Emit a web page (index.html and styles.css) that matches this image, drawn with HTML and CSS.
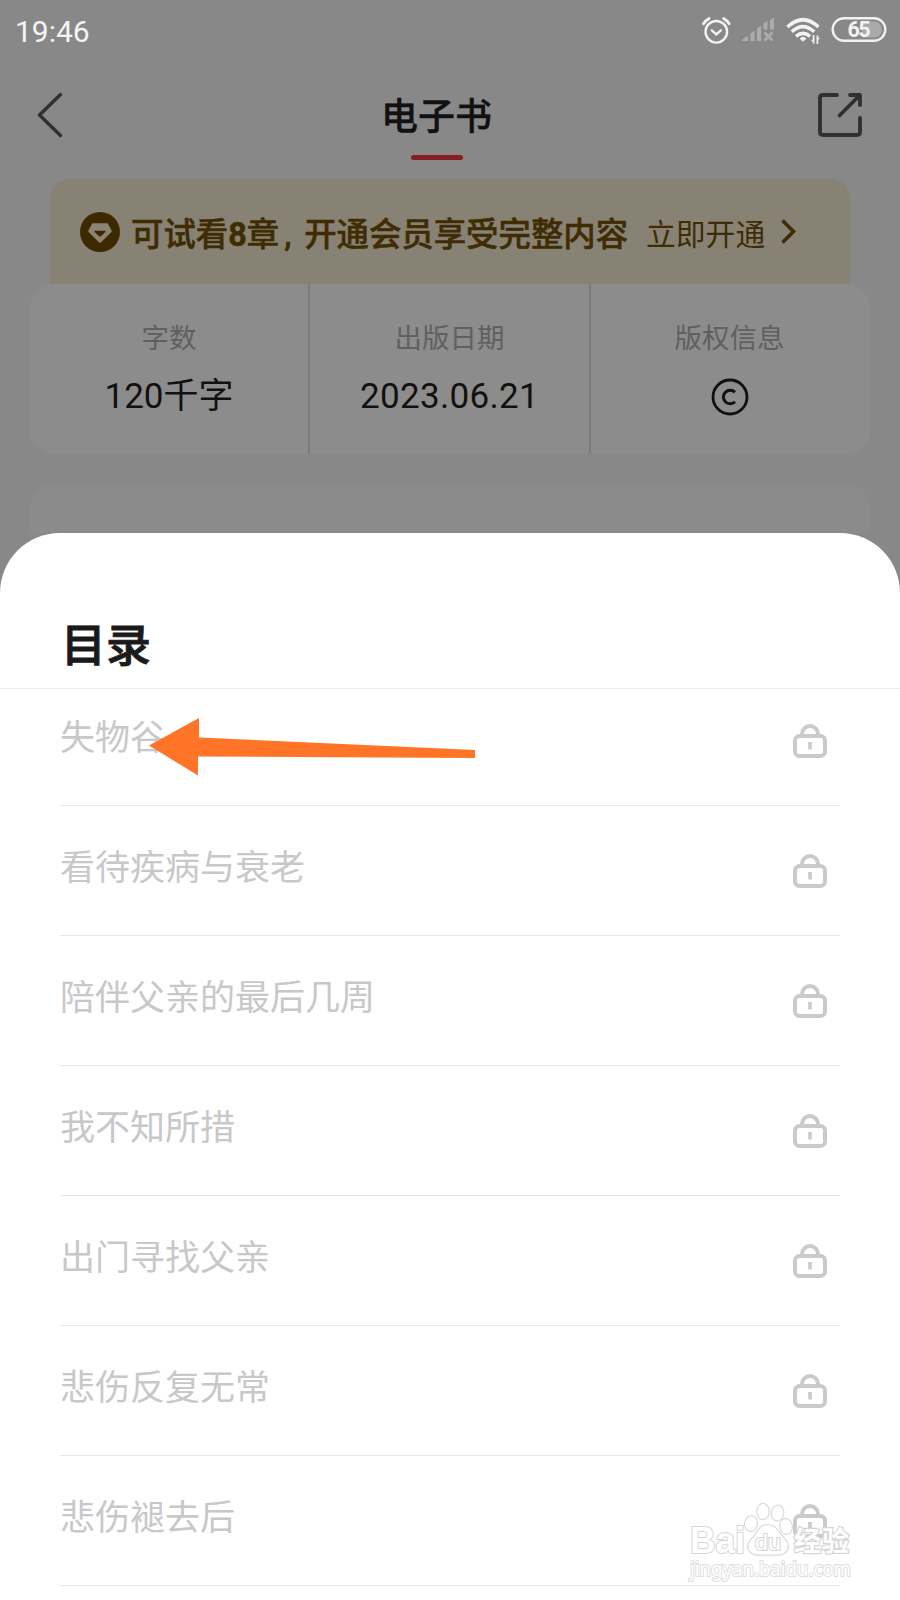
FILE: index.html
```
<!DOCTYPE html>
<html lang="zh-CN">
<head>
<meta charset="utf-8">
<title>电子书</title>
<link rel="stylesheet" href="styles.css">
</head>
<body>
<div class="screen">
  <div class="status">
    <span class="time">19:46</span>
    <svg class="status-icons" width="192" height="32" viewBox="700 14 192 32" fill="none">
      <g stroke="#f2f2f2" stroke-width="2.4" stroke-linecap="round">
        <circle cx="716.3" cy="31.8" r="10.8"/>
        <path d="M711.8 30.3l4.5 4 4.5-4"/>
        <path d="M703.5 23.8q2.200-3.600 5.600-5.300M729.200 23.800q-2.200-3.600-5.600-5.300" stroke-width="2.8"/>
      </g>
      <g fill="#acacac">
        <path d="M742 41q0-2 6-5.500v5.500zM750.500 33.500l4-3v10.500h-4zM757 28.500l4-3v15.500h-4zM763.500 23.500l4-3v9h-4zM770 20l4-2.500v12h-4z"/>
        <path d="M764.500 32.500l8 8M772.500 32.500l-8 8" stroke="#acacac" stroke-width="2.600"/>
      </g>
      <g stroke="#f2f2f2" stroke-width="3.600">
        <path d="M787.500 27Q803 12.500 818.500 27"/>
        <path d="M791.800 31.800Q803 21.500 814.200 31.800"/>
        <path d="M796 36.400Q803 30.500 810 36.400"/>
      </g>
      <path d="M800 38.500q3-2.500 6 0l-3 2.700z" fill="#f2f2f2" stroke="#f2f2f2" stroke-width="1" stroke-linejoin="round"/>
      <path d="M813.600 35v8.500M817.400 35.500v8.500M811.600 40.500h2M817.400 38.500h2" stroke="#f2f2f2" stroke-width="1.700"/>
      <path d="M862 21.500h12a8 8 0 0 1 0 16h-12z" fill="#aaa"/>
      <rect x="832.700" y="18.200" width="52.600" height="22.600" rx="11.300" stroke="#f2f2f2" stroke-width="2.400"/>
      <text class="battery" x="859" y="37.300" text-anchor="middle" textLength="23">65</text>
    </svg>
  </div>

  <div class="nav">
    <svg width="30" height="48" viewBox="35 91 30 48" fill="none" stroke="#303030" stroke-width="3.400" stroke-linecap="round" stroke-linejoin="round"><path d="M60.500 94.500L39.500 115l21 20.500"/></svg>
    <div class="nav-title"><span>电子书</span><i class="nav-bar"></i></div>
    <svg width="48" height="48" viewBox="816 91 48 48" fill="none" stroke="#303030" stroke-width="3.800" stroke-linecap="round" stroke-linejoin="round"><path d="M837 95h-14q-3 0-3 3v34q0 3 3 3h34q3 0 3-3v-14M850 95h10v10M859 96l-19.500 19.500"/></svg>
  </div>

  <div class="banner">
    <svg class="gem" width="40" height="40" viewBox="0 0 40 40"><circle cx="20" cy="20" r="20" fill="#3d2900"/><path d="M13 12.500h14l3.500 6.500L20 29.500 9.500 19z" fill="#8b8473" stroke="#8b8473" stroke-width="2.500" stroke-linejoin="round"/><path d="M15 19.500h10l-5 4.500z" fill="#3d2900" stroke="#3d2900" stroke-width="1.500" stroke-linejoin="round"/></svg>
    <span class="banner-text">可试看<b>8</b>章<span class="comma">,</span>开通会员享受完整内容</span>
    <span class="banner-link">立即开通</span>
    <svg class="banner-arrow" width="18" height="28" viewBox="0 0 18 28" fill="none" stroke="#3f2c05" stroke-width="3.600"><path d="M2.500 2.500L13.500 13.500 2.500 24.500"/></svg>
  </div>

  <div class="info">
    <div class="cell"><span class="label">字数</span><span class="value">120千字</span></div>
    <div class="cell"><span class="label">出版日期</span><span class="value date">2023.06.21</span></div>
    <div class="cell"><span class="label">版权信息</span>
      <span class="value"><svg width="38" height="38" viewBox="0 0 38 38" fill="none" stroke="#111"><circle cx="19" cy="19" r="17" stroke-width="2.800"/><path d="M24 14.200a6.800 6.800 0 1 0 0 9.600" stroke-width="3"/></svg></span></div>
  </div>
  <div class="card-next"></div>
</div>

<div class="sheet">
  <h1 class="sheet-title">目录</h1>
  <ul class="chapters">
    <li><span>失物谷</span><svg class="lock"><use href="#lock"/></svg></li>
    <li><span>看待疾病与衰老</span><svg class="lock"><use href="#lock"/></svg></li>
    <li><span>陪伴父亲的最后几周</span><svg class="lock"><use href="#lock"/></svg></li>
    <li><span>我不知所措</span><svg class="lock"><use href="#lock"/></svg></li>
    <li><span>出门寻找父亲</span><svg class="lock"><use href="#lock"/></svg></li>
    <li><span>悲伤反复无常</span><svg class="lock"><use href="#lock"/></svg></li>
    <li><span>悲伤褪去后</span><svg class="lock"><use href="#lock"/></svg></li>
  </ul>
</div>

<svg class="defs" width="0" height="0"><symbol id="lock" viewBox="0 0 36 36"><g fill="none" stroke="#c9cacc" stroke-width="4"><rect x="3" y="13" width="30" height="20" rx="4.500"/><path d="M10 12.500v-1.500a8 8 0 0 1 16 0v1.500"/><path d="M18 19v7.500" stroke-width="3.600"/></g></symbol></svg>

<svg class="arrow" width="330" height="60" viewBox="148 716 330 60"><path fill="#ff7426" d="M149 745.500L199 718v19.500L475 750v8l-277-1.500v19z"/></svg>

<svg class="watermark" width="170" height="86" viewBox="686 1500 170 86">
  <g fill="#fff" fill-opacity=".85" stroke="#dadada" stroke-width="1.200">
    <ellipse cx="751" cy="1523.500" rx="6.500" ry="8" transform="rotate(8 751 1523.500)"/>
    <ellipse cx="763" cy="1511.500" rx="6.300" ry="8.200"/>
    <ellipse cx="777.500" cy="1513" rx="6.300" ry="8" transform="rotate(10 777.500 1513)"/>
    <ellipse cx="786" cy="1526.500" rx="6.300" ry="8" transform="rotate(-10 786 1526.500)"/>
    <path d="M768 1524.500c8 0 9.500 6 14 11s7.500 8 6 13c-2 7-8 7-20 6.500-12 .500-18 .500-20-6.500-1.500-5 2-8 6-13s6-11 14-11z"/>
  </g>
  <g class="mark-outline">
    <text x="690" y="1553" font-size="36" textLength="55" lengthAdjust="spacingAndGlyphs">Bai</text>
    <text class="mark-du" x="755" y="1550" font-size="22" textLength="26" lengthAdjust="spacingAndGlyphs">du</text>
    <text class="mark-cn" x="794" y="1551" font-size="27" textLength="55">经验</text>
  </g>
  <text class="mark-url" x="690" y="1576" textLength="161" lengthAdjust="spacingAndGlyphs">jingyan.baidu.com</text>
</svg>
</body>
</html>
```
FILE: styles.css
```
* { box-sizing: border-box; }
body {
  margin: 0;
  width: 900px;
  height: 1600px;
  overflow: hidden;
  position: relative;
  background: #888;
  font-family: Roboto, "Noto Sans CJK SC", sans-serif;
}
svg { display: block; flex: none; }
.screen { height: 533px; overflow: hidden; display: flex; flex-direction: column; }

.status { height: 62px; flex: none; padding: 0 8px 0 15px; display: flex; justify-content: space-between; }
.time { font-size: 30px; line-height: 64px; color: #f4f4f4; }
.status-icons { margin-top: 14px; }
.battery { font-size: 21.5px; font-weight: 700; fill: #f2f2f2; }

.nav {
  height: 117px;
  flex: none;
  padding: 29px 36px 0 35px;
  display: flex;
  justify-content: space-between;
  align-items: flex-start;
}
.nav-title {
  display: flex;
  flex-direction: column;
  align-items: center;
  padding: 3px 8px 0 0;
  color: #111;
  font-size: 37px;
  font-weight: 500;
  -webkit-text-stroke: .4px #111;
  line-height: 48px;
}
.nav-bar { width: 52px; height: 5px; margin-top: 13px; border-radius: 3px; background: #842023; }

.banner {
  height: 105px;
  flex: none;
  margin: 0 50px;
  padding-left: 30px;
  border-radius: 20px 20px 0 0;
  background: #878274;
  color: #3f2c05;
  display: flex;
  align-items: center;
  white-space: nowrap;
}
.banner-text { width: 515px; margin-left: 11px; font-size: 32.4px; font-weight: 500; -webkit-text-stroke: .5px #3f2c05; }
.comma { display: inline-block; width: 25px; padding-left: 5px; }
.banner-link { width: 119px; font-size: 29.8px; }
.banner-arrow { margin-left: 15px; }

.info {
  height: 170px;
  flex: none;
  margin: 0 30px;
  border-radius: 24px;
  background: #8c8c8c;
  display: grid;
  grid-template-columns: 278px 281px 281px;
}
.cell { display: flex; flex-direction: column; align-items: center; padding-top: 35px; }
.cell + .cell { border-left: 2px solid #7b7b7b; }
.cell:last-child { padding-right: 2px; }
.label { height: 40px; line-height: 40px; font-size: 27.5px; color: #606060; }
.value { height: 50px; margin-top: 13px; line-height: 50px; font-size: 35px; color: #111; display: flex; align-items: center; }
.date { letter-spacing: .3px; }
.card-next { height: 80px; flex: none; margin: 30px 30px 0; border-radius: 24px; background: #8b8b8b; }

.sheet { height: 1067px; overflow: hidden; background: #fff; border-radius: 60px 60px 0 0; }
.sheet-title {
  height: 156px;
  margin: 0;
  padding: 83px 0 0 61px;
  border-bottom: 1px solid #ebebeb;
  color: #1a1a1a;
  font-size: 45px;
  font-weight: 500;
  -webkit-text-stroke: .9px #1a1a1a;
  line-height: 62px;
}
.chapters { list-style: none; margin: 0; padding: 0 60px; }
.chapters li {
  height: 130px;
  padding: 0 12px 41px 0;
  border-bottom: 1px solid #e8e8e8;
  display: flex;
  justify-content: space-between;
  align-items: flex-end;
  color: #c8c8ca;
  font-size: 35px;
  line-height: 50px;
}
.chapters li:first-child { height: 117px; }
.lock { width: 36px; height: 36px; margin-bottom: 5px; }

.defs { position: absolute; }
.arrow { position: absolute; left: 148px; top: 716px; }
.watermark { position: absolute; left: 686px; top: 1500px; }
.mark-outline text {
  font-family: "Liberation Sans", "Noto Sans CJK SC", sans-serif;
  font-weight: 700;
  fill: #fff;
  stroke: #d6d6d6;
  stroke-width: 2px;
  paint-order: stroke;
}
.mark-outline .mark-du { font-weight: 400; }
.mark-outline .mark-cn { stroke-width: 2.4px; }
.mark-url { font-family: "Noto Sans", sans-serif; font-size: 19px; fill: #fff; stroke: #dedede; stroke-width: 2px; paint-order: stroke; }
```
